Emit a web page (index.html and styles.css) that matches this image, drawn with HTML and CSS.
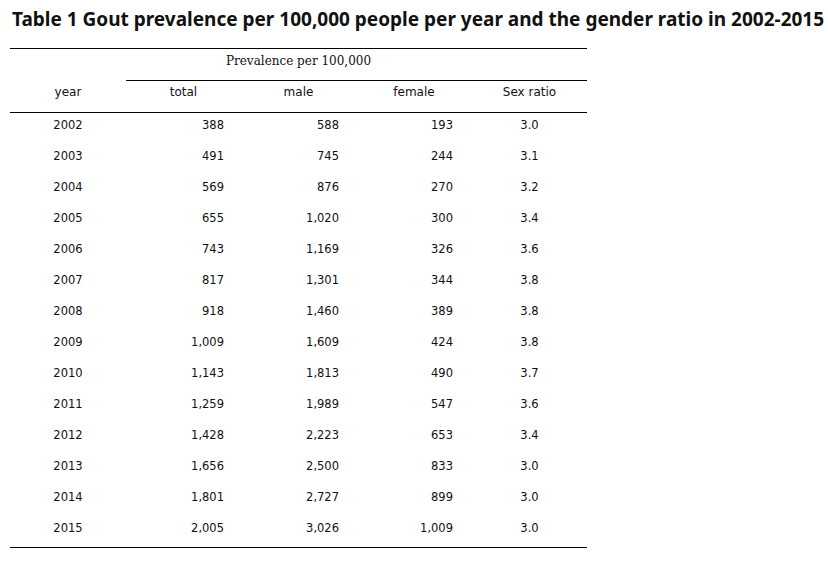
FILE: index.html
```html
<!DOCTYPE html>
<html>
<head>
<meta charset="utf-8">
<link rel="stylesheet" href="styles.css">
</head>
<body>
<h1 class="title">Table 1 Gout prevalence per 100,000 people per year and the gender ratio in 2002-2015</h1>
<table class="data">
  <colgroup>
    <col class="c-year"><col class="c-num"><col class="c-num"><col class="c-num2"><col class="c-num">
  </colgroup>
  <thead>
    <tr class="h1">
      <th colspan="5" class="group">Prevalence per 100,000</th>
    </tr>
    <tr class="h2">
      <th class="yr">year</th>
      <th>total</th>
      <th>male</th>
      <th>female</th>
      <th>Sex ratio</th>
    </tr>
  </thead>
  <tbody>
    <tr><td class="yr">2002</td><td class="n">388</td><td class="n">588</td><td class="n f">193</td><td class="r">3.0</td></tr>
    <tr><td class="yr">2003</td><td class="n">491</td><td class="n">745</td><td class="n f">244</td><td class="r">3.1</td></tr>
    <tr><td class="yr">2004</td><td class="n">569</td><td class="n">876</td><td class="n f">270</td><td class="r">3.2</td></tr>
    <tr><td class="yr">2005</td><td class="n">655</td><td class="n">1,020</td><td class="n f">300</td><td class="r">3.4</td></tr>
    <tr><td class="yr">2006</td><td class="n">743</td><td class="n">1,169</td><td class="n f">326</td><td class="r">3.6</td></tr>
    <tr><td class="yr">2007</td><td class="n">817</td><td class="n">1,301</td><td class="n f">344</td><td class="r">3.8</td></tr>
    <tr><td class="yr">2008</td><td class="n">918</td><td class="n">1,460</td><td class="n f">389</td><td class="r">3.8</td></tr>
    <tr><td class="yr">2009</td><td class="n">1,009</td><td class="n">1,609</td><td class="n f">424</td><td class="r">3.8</td></tr>
    <tr><td class="yr">2010</td><td class="n">1,143</td><td class="n">1,813</td><td class="n f">490</td><td class="r">3.7</td></tr>
    <tr><td class="yr">2011</td><td class="n">1,259</td><td class="n">1,989</td><td class="n f">547</td><td class="r">3.6</td></tr>
    <tr><td class="yr">2012</td><td class="n">1,428</td><td class="n">2,223</td><td class="n f">653</td><td class="r">3.4</td></tr>
    <tr><td class="yr">2013</td><td class="n">1,656</td><td class="n">2,500</td><td class="n f">833</td><td class="r">3.0</td></tr>
    <tr><td class="yr">2014</td><td class="n">1,801</td><td class="n">2,727</td><td class="n f">899</td><td class="r">3.0</td></tr>
    <tr class="last"><td class="yr">2015</td><td class="n">2,005</td><td class="n">3,026</td><td class="n f">1,009</td><td class="r">3.0</td></tr>
  </tbody>
</table>
</body>
</html>
```
FILE: styles.css
```css
html, body {
  margin: 0;
  padding: 0;
  background: #ffffff;
  color: #000000;
}

.title {
  margin: 0;
  padding: 6px 0 0 12px;
  font-family: "Noto Sans", "Open Sans", sans-serif;
  font-weight: 700;
  font-size: 19px;
  line-height: 26px;
  height: 42px;
  color: #111111;
  white-space: nowrap;
}

.data {
  margin-left: 10px;
  margin-top: 0;
  width: 577px;
  table-layout: fixed;
  border-collapse: separate;
  border-spacing: 0;
  font-family: "DejaVu Sans", sans-serif;
  color: #111111;
}

.c-year { width: 116px; }
.c-num { width: 115px; }
.c-num2 { width: 116px; }

.data th {
  font-weight: normal;
  font-size: 12px;
  line-height: 14px;
  text-align: center;
  vertical-align: top;
}

.h1 .group {
  font-family: "DejaVu Serif", serif;
  border-top: 1px solid #000;
  padding: 5px 0 12px 0;
}

.h2 th {
  border-top: 1px solid #000;
  border-bottom: 1px solid #000;
  padding: 4px 0 13px 0;
}

.h2 th.yr {
  border-top-color: transparent;
}

.data td {
  font-size: 11.5px;
  line-height: 14px;
  padding: 5px 0 12px 0;
  vertical-align: top;
}

.data td.yr { text-align: center; }
.data td.n { text-align: right; padding-right: 17px; }
.data td.n.f { padding-right: 19px; }
.data td.r { text-align: center; }

.data tr.last td {
  border-bottom: 1px solid #000;
}
```
